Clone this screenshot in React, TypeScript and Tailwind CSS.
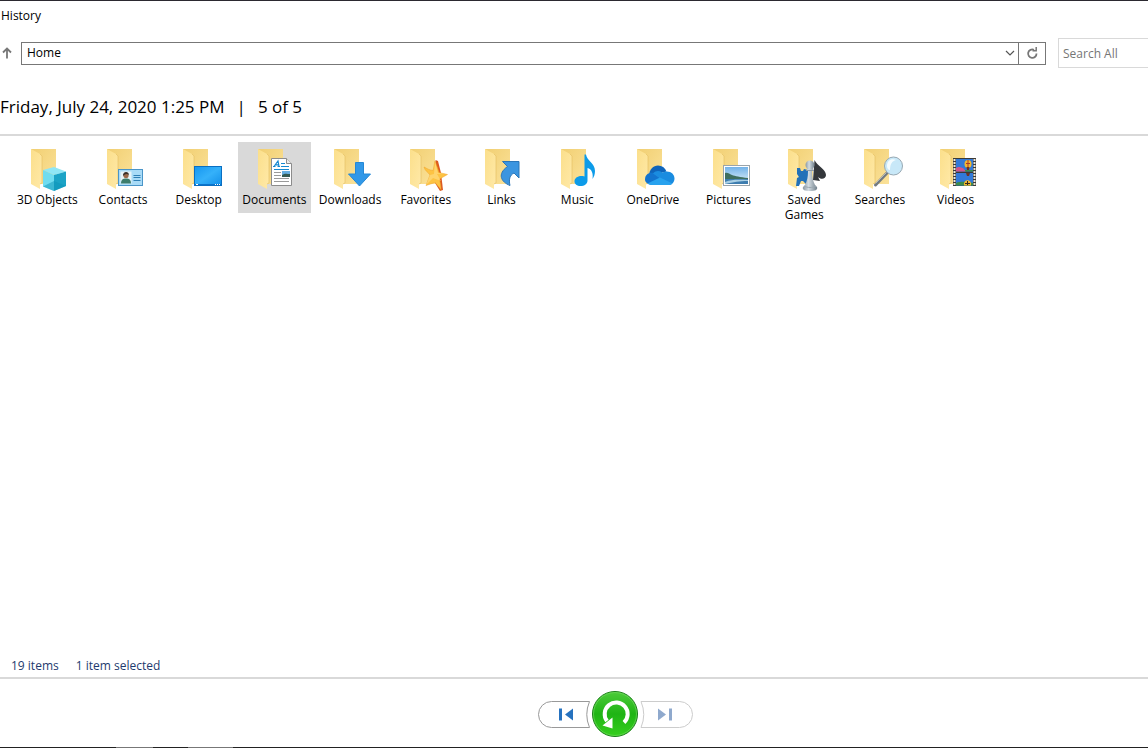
import { useState } from 'react';
import type { ReactNode } from 'react';

interface FolderItem {
  name: string;
  overlay: ReactNode;
}

const folders: FolderItem[] = [
  {
    name: '3D Objects',
    overlay: (
      <>
        <path d="M20 25 31 22 43 26.5 31 30Z" fill="#8fe6f5" />
        <path d="M20 25 31 30V46L20 41.5Z" fill="#6fdcf0" />
        <path d="M43 26.5 31 30V46L43 41Z" fill="#1ba3c6" />
        <path d="M20 41.5 31 36 43 41 31 46Z" fill="#0b93b8" opacity=".5" />
      </>
    ),
  },
  {
    name: 'Contacts',
    overlay: (
      <>
        <rect x="19.5" y="24.5" width="24" height="16" fill="#a9dbf7" stroke="#4a95c8" />
        <rect x="21.5" y="26.5" width="11" height="12" fill="#e9f4f8" />
        <path d="M22 38.5c0-4 2-5 5-5s5 1 5 5z" fill="#3c7d6c" />
        <circle cx="27" cy="30.5" r="2.6" fill="#9a6a4c" />
        <path d="M24 31c-.5-5 6-5 6-1-2-2-4-1-6 1z" fill="#3b3029" />
        <path d="M34.5 30.5h7M34.5 32.5h7M34.5 35.5h7" stroke="#2f7fb5" />
      </>
    ),
  },
  {
    name: 'Desktop',
    overlay: (
      <>
        <rect x="19.5" y="21.5" width="27" height="19" fill="url(#screen)" stroke="#0a6fc2" />
        <path d="M20 39.5h26" stroke="#0b74cc" />
        <path d="M21 39.5h2M40 39.5h1M42 39.5h1M44 39.5h1" stroke="#fff" />
      </>
    ),
  },
  {
    name: 'Documents',
    overlay: (
      <>
        <path d="M21.5 13.5h15l5 5v22h-20z" fill="#fff" stroke="#8c8c8c" />
        <path d="M36.5 13.5v5h5" fill="#eee" stroke="#8c8c8c" />
        <path d="m24 21.5 4-5.500 1 5.500M25.500 19.800H29M23 21.500h2.500M27.500 21.500h2.500" fill="none" stroke="#1689d1" strokeWidth="1.2" />
        <path d="M31 18.5h4M31 21.5h8M24 24.5h15" stroke="#1689d1" />
        <path d="M24 27.5h7M24 30.5h7M24 33.5h15M24 36.5h15" stroke="#9a9a9a" />
        <rect x="32" y="26" width="8" height="6" fill="#67aee0" />
        <path d="M32 30c3-2 5-1 8-1v3h-8z" fill="#355a52" />
      </>
    ),
  },
  {
    name: 'Downloads',
    overlay: <path d="M29.5 17.5h8V29h7l-11 12-11-12h7z" fill="#3198e8" stroke="#2588d6" />,
  },
  {
    name: 'Favorites',
    overlay: (
      <>
        <path d="m33.5 15 2.500 1 3 12 2 17-3 1-5-8z" fill="#dc5a1f" />
        <path d="M33 16c-1 4-1 6-2 9.500-4-.5-6-2-9-3.500 1 4 4 5 6 8l-4 10.500 9-3 6 7c0-4-1-7-1.500-10.500l8-4.500-8.500-2c-1-4-3-8-4-11.500z" fill="#fdc343" stroke="#eea32b" strokeWidth=".5" />
        <path d="m33 17-1 12-4 1-4 10 7-7 8 3-4-7 9-.5-8-.5z" fill="#ffe08a" opacity=".6" />
      </>
    ),
  },
  {
    name: 'Links',
    overlay: (
      <path d="M25.5 16.5H42V33l-5-5c-4 2-5.500 6-4 12.500C24 37 20 29 30.500 21.500z" fill="#3b95e0" stroke="#2b76b8" />
    ),
  },
  {
    name: 'Music',
    overlay: (
      <path d="M31.5 9.5H33C34 16 42 18 42 26c0 3-1 6-2.500 8 1-6-1-10-5-11v12.500c0 3.500-3 5.500-7 5.500-3.500 0-6-1.800-6-4.500 0-3.500 4-6.500 10-5z" fill="#0c9be9" />
    ),
  },
  {
    name: 'OneDrive',
    overlay: (
      <>
        <path d="M20 31c0-6.500 4.500-10.500 9-10.500 4 0 7 2 8.500 6z" fill="#0f64ba" />
        <path d="M16 34.500c0-5 4-7.500 9-6.500l12 10-12 2c-5 0-9-2-9-5.500z" fill="#1274cf" />
        <path d="M24 28.500c3-3 6-3 9-1l4-1c5-.5 8.500 3 8.500 7 0 3-2 6-5 6.500z" fill="#1a8ce0" />
        <path d="m18.500 38.500 12.500-6 12.500 6c-1 1-3 1.500-5 1.500H24c-2 0-4-.5-5.500-1.500z" fill="#28a2ee" />
      </>
    ),
  },
  {
    name: 'Pictures',
    overlay: (
      <>
        <rect x="18.5" y="20.5" width="26" height="20" fill="#fff" stroke="#9aa4aa" />
        <rect x="20" y="22" width="23" height="17" fill="url(#sky)" />
        <path d="M20 28c3-1 4 1 7 2s8 2 16 3v2H20z" fill="#3f6f5f" />
        <path d="M20 34h23v5H20z" fill="#3d7cae" />
        <path d="M20 37c8-3 14-2 23-2v1c-9 0-14 1-23 3z" fill="#a9cfe4" />
      </>
    ),
  },
  {
    name: 'Saved Games',
    overlay: (
      <>
        <path d="M17 23h3l1 3h2l1-2 4 1v14h-2l-3-3h-2l-2 5h-3l1-8 2-1-2-3z" fill="#2371b8" />
        <path d="M34.5 15C37 21 46 24 46 30c0 4-5 5-8 2l2 4-7-1z" fill="#34373b" />
        <path d="M27 24h6v2h-1c0 6 1 10 3 14l2 2c1 3-2 4-7 4s-8-1-7-4l2-2c2-4 3-8 3-14h-1z" fill="url(#pawn)" />
        <circle cx="30" cy="20" r="4.5" fill="url(#pawn)" />
        <path d="M26 25.5h8" stroke="#8d9aa4" />
        <path d="M24 41c4 2 8 2 12 0" fill="none" stroke="#9aa7b0" />
      </>
    ),
  },
  {
    name: 'Searches',
    overlay: (
      <>
        <path d="m31 28-11.500 12" stroke="#747b80" strokeWidth="3" strokeLinecap="round" />
        <path d="m30.500 27.500-11 11" stroke="#b3b9bd" />
        <circle cx="37.5" cy="21" r="9" fill="#c8e8f8" stroke="#97a8b3" />
        <path d="M31 21c0-5 4-8 9-6-4 1-6 4-6 10-2 0-3-2-3-4z" fill="#f4fcff" />
      </>
    ),
  },
  {
    name: 'Videos',
    overlay: (
      <>
        <rect x="21" y="13" width="23" height="28" fill="#3c3a37" />
        <path d="M22.5 14v27M42.5 14v27" stroke="#eee8d8" strokeWidth="2" strokeDasharray="2 1" />
        <path d="M24 14h17v12.500H24zM24 28h17v12.500H24z" fill="#3279d8" />
        <path d="M24 23c4-2 5 0 7 0l3 3.500H24z" fill="#d1558a" />
        <path d="M33 25h8v1.500h-8zM24 38c5-2 13-1 17 0v2.500H24z" fill="#3c8b4d" />
        <ellipse cx="36" cy="19" rx="3.5" ry="4" fill="#f3b82e" />
        <path d="M36 15v7M34 18.5h4" stroke="#a83a2c" />
        <path d="M34.5 22h3l-.5 3h-2zM34 28h4l-1 3h-2z" fill="#6b3324" />
        <path d="M32 40.500c-1-7 8-7 7 0z" fill="#f3b82e" />
        <path d="M35.5 36v4M33 38.5h5" stroke="#34271e" />
      </>
    ),
  },
];

function FolderIcon({ children }: { children: ReactNode }) {
  return (
    <svg className="h-12 w-12" viewBox="0 0 48 48" aria-hidden="true">
      <path d="M8 4h25v35H17z" fill="url(#folderBack)" />
      <path d="M8 4l9 5 2 2v27l-2 1v5l-9-5z" fill="url(#folderFront)" />
      <path d="M17 9l2 2v27l-2 1" fill="none" stroke="#e3bd60" strokeWidth=".6" />
      {children}
    </svg>
  );
}

// Gradients shared by the folder icons
function IconDefs() {
  return (
    <svg className="absolute h-0 w-0" aria-hidden="true">
      <defs>
        <linearGradient id="folderBack" x1="0" y1="0" x2="1" y2="1">
          <stop offset="0" stopColor="#f1cf72" />
          <stop offset="1" stopColor="#fbe29a" />
        </linearGradient>
        <linearGradient id="folderFront" x1="0" y1="0" x2="1" y2="1">
          <stop offset="0" stopColor="#fbdf8b" />
          <stop offset="1" stopColor="#ffe9a8" />
        </linearGradient>
        <linearGradient id="screen" x1="0" y1="0" x2="1" y2="1">
          <stop offset="0" stopColor="#1596f0" />
          <stop offset=".5" stopColor="#35b1fa" />
          <stop offset="1" stopColor="#128fe9" />
        </linearGradient>
        <linearGradient id="sky" x1="0" y1="0" x2="0" y2="1">
          <stop offset="0" stopColor="#72b2e8" />
          <stop offset="1" stopColor="#e8f5fb" />
        </linearGradient>
        <linearGradient id="pawn">
          <stop offset="0" stopColor="#8997a2" />
          <stop offset=".4" stopColor="#d3dce2" />
          <stop offset="1" stopColor="#71808b" />
        </linearGradient>
        <linearGradient id="restore" x1="0" y1="0" x2="0" y2="1">
          <stop offset="0" stopColor="#4ccb3a" />
          <stop offset=".5" stopColor="#1fb414" />
          <stop offset="1" stopColor="#35cf1e" />
        </linearGradient>
      </defs>
    </svg>
  );
}

function AddressBar() {
  const [path, setPath] = useState('Home');

  return (
    <div className="flex items-center">
      <button type="button" aria-label="Up" className="flex h-6 w-[21px] items-center pl-[2px]">
        <svg width="10" height="12" viewBox="0 0 10 12" fill="none" stroke="#777" strokeWidth="1.8">
          <path d="M5 11.500V2M1 5.500 5 1.500l4 4" />
        </svg>
      </button>
      <div className="flex h-[23px] min-w-0 flex-1 border border-[#777]">
        <input
          aria-label="Location"
          value={path}
          onChange={e => setPath(e.target.value)}
          className="min-w-0 flex-1 px-[5px] outline-none"
        />
        <button type="button" aria-label="Previous locations" className="flex w-[17px] items-center justify-center">
          <svg width="10" height="6" viewBox="0 0 10 6" fill="none" stroke="#555" strokeWidth="1.2">
            <path d="m1 1 4 4 4-4" />
          </svg>
        </button>
      </div>
      <button type="button" aria-label="Refresh" className="flex h-[23px] w-[27px] items-center justify-center border border-l-0 border-[#777]">
        <svg width="12" height="12" viewBox="0 0 12 12" fill="none" stroke="#777" strokeWidth="1.8">
          <path d="M8 2.800A4.200 4.200 0 1 0 10.500 6.500" />
          <path d="M6.500 3.800h3.700V0" strokeWidth="1.5" />
        </svg>
      </button>
      <input
        type="search"
        aria-label="Search All"
        placeholder="Search All"
        className="ml-3 h-[30px] w-[90px] border border-r-0 border-[#d9d9d9] pl-1 outline-none placeholder:text-[#767676]"
      />
    </div>
  );
}

function Controls() {
  return (
    <div className="flex items-center justify-center gap-[2px] pt-3 pb-[10px] pl-[83px]">
      <button type="button" aria-label="Previous version">
        <svg width="52" height="27" viewBox="0 0 52 27">
          <path d="M51.5.5h-38a13 13 0 0 0 0 26h38Q46 13.500 51.500.5z" fill="#fff" stroke="#999" />
          <path d="M21 7.500h3v12h-3zM35 7.500v12l-8-6z" fill="#2672bf" />
        </svg>
      </button>
      <button type="button" aria-label="Restore">
        <svg width="46" height="46" viewBox="0 0 46 46">
          <circle cx="23" cy="23" r="22.5" fill="url(#restore)" stroke="#187d16" />
          <circle cx="23" cy="23" r="21.5" fill="none" stroke="#79dd67" strokeWidth=".6" />
          <path d="M32 31.500A11.500 11.500 0 1 0 15 30" fill="none" stroke="#fff" strokeWidth="4" />
          <path d="M10.500 34.500 20.500 26.500v11z" fill="#fff" />
        </svg>
      </button>
      <button type="button" aria-label="Next version" disabled>
        <svg width="53" height="27" viewBox="0 0 53 27">
          <path d="M1 .5h38.500a13 13 0 0 1 0 26H1Q6.500 13.500 1 .5z" fill="#fff" stroke="#ccc" />
          <path d="M18 7.500l8 6-8 6zM29 7.500h3v12h-3z" fill="#8fa9cd" />
        </svg>
      </button>
    </div>
  );
}

export default function App() {
  const [selected, setSelected] = useState('Documents');

  return (
    <div className="flex min-h-screen flex-col bg-white font-['Open_Sans','Noto_Sans',sans-serif] text-xs text-black">
      <IconDefs />
      <header className="border-t border-t-[#2b2930] border-b-2 border-b-[#d9d9d9]">
        <div className="px-px pt-[7px] leading-4">History</div>
        <div className="pt-[14px]">
          <AddressBar />
        </div>
        <h1 className="flex gap-3 pt-[27px] pb-[15px] text-[17px] leading-6">
          <span>Friday, July 24, 2020 1:25 PM</span>
          <span>|</span>
          <span>5 of 5</span>
        </h1>
      </header>

      <main className="flex-1 pt-[6px] pl-[11px]">
        <ul className="grid max-w-[981px] grid-cols-13 items-start gap-[3px]">
          {folders.map(folder => (
            <li key={folder.name}>
              <button
                type="button"
                onClick={() => setSelected(folder.name)}
                className={`flex w-full flex-col items-center pt-[3px] pb-[6px] leading-[15px] ${
                  selected === folder.name ? 'bg-[#d9d9d9]' : ''
                }`}
              >
                <FolderIcon>{folder.overlay}</FolderIcon>
                <span className="-mt-px">{folder.name}</span>
              </button>
            </li>
          ))}
        </ul>
      </main>

      <div className="flex gap-[17px] pb-[3px] pl-[11px] leading-4 text-[#1e3a6e]">
        <span>19 items</span>
        <span>1 item selected</span>
      </div>
      <footer className="border-t-2 border-[#d9d9d9]">
        <Controls />
        <div className="h-px bg-[linear-gradient(90deg,#222_116px,#777_116px,#777_153px,#222_153px,#222_188px,#777_188px,#777_233px,#222_233px)]" />
      </footer>
    </div>
  );
}
